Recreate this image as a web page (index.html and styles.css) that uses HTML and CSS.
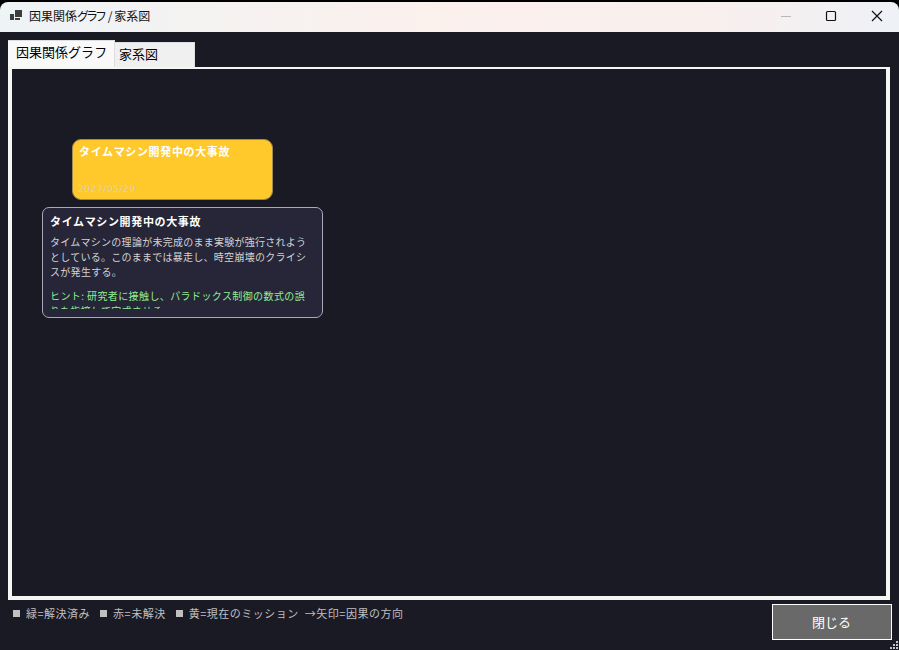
FILE: index.html
```html
<!DOCTYPE html>
<html lang="ja">
<head>
<meta charset="utf-8">
<title>因果関係グラフ / 家系図</title>
<link rel="stylesheet" href="styles.css">
</head>
<body>
<div class="window">
  <header class="titlebar">
    <svg class="app-icon" width="12" height="11" viewBox="0 0 12 11" fill="#3d3d3d"><path d="M5 0h7v7H5zM0 4h4v6H0zM5 8h5v2H5z"/></svg>
    <h1 class="title">因果関係<span class="title-kana">グラフ</span> / <span class="title-end">家系図</span></h1>
    <div class="controls">
      <svg width="46" height="30" viewBox="0 0 46 30" fill="none" stroke="#b9b9b9"><path d="M18 14.5h10"/></svg>
      <svg width="46" height="30" viewBox="0 0 46 30" fill="none" stroke="#111" stroke-width="1.2"><rect x="17.5" y="9.5" width="9" height="9" rx="1"/></svg>
      <svg width="46" height="30" viewBox="0 0 46 30" fill="none" stroke="#111" stroke-width="1.2"><path d="M17 9l10 10M27 9L17 19"/></svg>
    </div>
  </header>
  <main class="content">
    <nav class="tabs">
      <div class="tab active">因果関係<span class="tab-kana">グラフ</span></div>
      <div class="tab">家系図</div>
    </nav>
    <section class="graph">
      <article class="node">
        <h2 class="heading">タイムマシン開発中の大事故</h2>
        <time class="date">2027/05/29</time>
      </article>
      <aside class="detail">
        <h2 class="heading">タイムマシン開発中の大事故</h2>
        <p class="description"><span class="line">タイムマシンの理論が未完成のまま実験が強行されよう</span><span class="line">としている。このままでは暴走し、時空崩壊のクライシ</span><span class="line third">スが発生する。</span></p>
        <p class="hint"><span class="line wide">ヒント: 研究者に接触し、パラドックス制御の数式の誤</span><span class="line">りを指摘して完成させる。</span></p>
      </aside>
    </section>
    <footer class="footer">
      <div class="legend">
        <span class="entry"><i class="swatch"></i>緑=解決済み</span>
        <span class="entry"><i class="swatch"></i>赤=未解決</span>
        <span class="entry mission"><i class="swatch"></i>黄=現在のミッション</span>
        <span class="entry">→矢印=因果の方向</span>
      </div>
      <button class="close">閉じる</button>
    </footer>
  </main>
  <svg class="grip" width="9" height="9" viewBox="0 0 9 9" fill="#c4c4c8"><path d="M6 0h2v2H6zM3 3h2v2H3zM6 3h2v2H6zM0 6h2v2H0zM3 6h2v2H3zM6 6h2v2H6z"/></svg>
</div>
</body>
</html>
```
FILE: styles.css
```css
* { box-sizing: border-box; }
body {
  margin: 0;
  background: #000;
  font-family: "Noto Sans CJK JP", sans-serif;
  font-weight: 400;
}
h1, h2, p { margin: 0; font-weight: inherit; }
svg { display: block; }

.window {
  position: relative;
  width: 899px;
  height: 650px;
  padding-top: 2px;
  background: #000;
  overflow: hidden;
}
.titlebar {
  display: flex;
  height: 30px;
  padding-left: 10px;
  border-radius: 8px 8px 0 0;
  background: linear-gradient(90deg, #eef3f5 0%, #f5f2f1 25%, #fbf0ec 50%, #f8efee 80%, #eef1f6 100%);
}
.app-icon { margin: 8px 7px 0 0; }
.title {
  font-size: 12px;
  line-height: 28px;
  color: #111;
  white-space: nowrap;
}
.title-kana { letter-spacing: -3px; margin-right: 1px; }
.title-end { margin-left: -1px; }
.controls { display: flex; margin-left: auto; margin-right: -2px; }

.content {
  display: flex;
  flex-direction: column;
  height: 618px;
  padding: 8px 7px 10px 8px;
  background: #1a1a24;
}
.tabs { display: flex; align-items: flex-end; height: 27px; }
.tab {
  width: 80px;
  height: 25px;
  padding-left: 4px;
  background: #f0f0f0;
  border: 1px solid #dedede;
  border-width: 1px 1px 0 0;
  color: #000;
  font-size: 13px;
  line-height: 22px;
  white-space: nowrap;
}
.tab.active {
  width: 107px;
  height: 27px;
  padding-left: 8px;
  background: #f9f9f9;
  line-height: 22px;
}
.tab-kana { letter-spacing: .1px; }
.graph {
  width: 882px;
  height: 533px;
  padding: 70px 0 0 30px;
  border: solid #f5f5f4;
  border-width: 2px 4px 4px;
}
.node {
  display: flex;
  flex-direction: column;
  justify-content: space-between;
  width: 201px;
  height: 61px;
  margin-left: 30px;
  padding: 4px 6px 5px;
  border: 1px solid #a28b52;
  border-radius: 9px;
  background: #ffc92b;
  color: #fff;
}
.heading {
  font-size: 11px;
  font-weight: 700;
  line-height: 15px;
  letter-spacing: .64px;
  color: #fff;
  white-space: nowrap;
}
.date {
  margin-left: -1px;
  font-family: "DejaVu Sans", sans-serif;
  font-size: 9.5px;
  line-height: 11px;
  letter-spacing: .3px;
  color: #d8d0b8;
}
.detail {
  width: 281px;
  height: 111px;
  margin-top: 7px;
  padding: 6px 7px 5px;
  border: 1px solid #a9a9bb;
  border-radius: 7px;
  background: #262638;
  font-size: 10px;
  line-height: 15px;
}
.description { margin-top: 5px; color: #d3d3d3; }
.hint { height: 21px; margin-top: 9px; overflow: hidden; color: #90ee90; }
.line { display: block; letter-spacing: .26px; white-space: nowrap; }
.line.wide { letter-spacing: .4px; }
.line.third { letter-spacing: .3px; }

.footer { display: flex; align-items: flex-start; justify-content: space-between; }
.legend {
  display: flex;
  padding: 5px 0 0 5px;
  color: #bfbfc2;
  font-size: 11px;
  line-height: 16px;
  letter-spacing: .5px;
  white-space: nowrap;
}
.entry { display: flex; align-items: center; margin-right: 10px; }
.entry.mission { margin-right: 6px; }
.swatch { width: 7px; height: 7px; margin-right: 6px; background: #c0c0c0; }
.close {
  width: 120px;
  height: 36px;
  margin-top: 4px;
  padding: 0 1px 0 0;
  border: 1px solid #fff;
  background: #696969;
  color: #fff;
  font-family: inherit;
  font-size: 13px;
  font-weight: 400;
  line-height: 32px;
}
.grip { position: absolute; right: 0; bottom: 0; }
```
